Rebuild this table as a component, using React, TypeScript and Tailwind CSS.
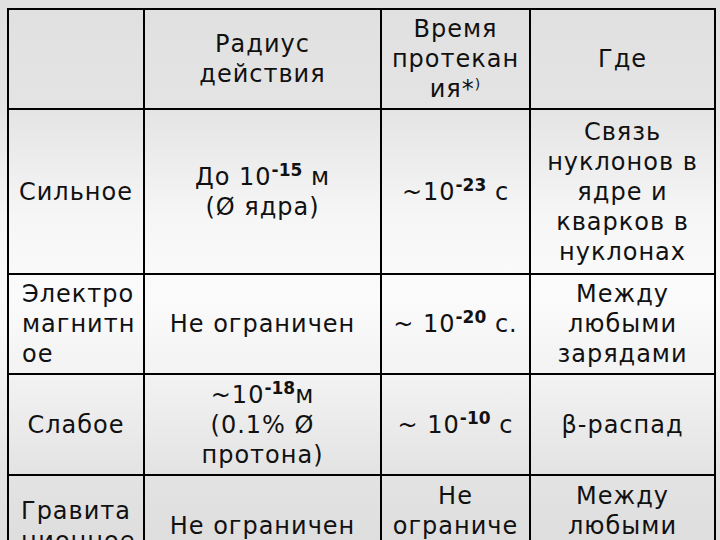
import React from "react";

const Sup = ({ children }: { children: React.ReactNode }) => (
  <span className="relative -top-[9px] text-[17px] font-bold leading-none tracking-normal">{children}</span>
);

export default function App() {
  const td = "border-2 border-black align-middle px-[4px] text-center";
  return (
    <div
      className="w-[720px] h-[540px] overflow-hidden bg-[linear-gradient(to_bottom,#e0e0e0_0%,#e4e4e4_20%,#f6f6f6_40%,#fbfbfb_55%,#f2f2f2_70%,#e3e3e3_88%,#dedede_100%)] text-[#111] text-[24px] leading-[30px] tracking-[1px]"
      style={{ fontFamily: '"DejaVu Sans", Verdana, sans-serif' }}
    >
      <div className="pt-[8px] pl-[7px]">
        <table className="border-collapse table-fixed w-[707px]">
          <colgroup>
            <col className="w-[136px]" />
            <col className="w-[237px]" />
            <col className="w-[149px]" />
            <col className="w-[185px]" />
          </colgroup>
          <tbody>
            <tr className="h-[100px]">
              <td className={td}></td>
              <td className={td}>
                Радиус
                <br />
                действия
              </td>
              <td className={td}>
                Время
                <br />
                протекан
                <br />
                ия*<span className="relative -top-[8px] text-[14px] leading-none">)</span>
              </td>
              <td className={td}>Где</td>
            </tr>
            <tr className="h-[165px]">
              <td className={td}>Сильное</td>
              <td className={td}>
                До 10<Sup>-15</Sup> м
                <br />
                (Ø ядра)
              </td>
              <td className={td}>
                ~10<Sup>-23</Sup> с
              </td>
              <td className={td}>
                Связь
                <br />
                нуклонов в
                <br />
                ядре и
                <br />
                кварков в
                <br />
                нуклонах
              </td>
            </tr>
            <tr className="h-[100px]">
              <td className={`${td} !text-left !pl-[13px]`}>
                Электро
                <br />
                магнитн
                <br />
                ое
              </td>
              <td className={td}>Не ограничен</td>
              <td className={td}>
                ~ 10<Sup>-20</Sup> с.
              </td>
              <td className={td}>
                Между
                <br />
                любыми
                <br />
                зарядами
              </td>
            </tr>
            <tr className="h-[101px]">
              <td className={td}>Слабое</td>
              <td className={td}>
                ~10<Sup>-18</Sup>м
                <br />
                (0.1% Ø
                <br />
                протона)
              </td>
              <td className={td}>
                ~ 10<Sup>-10</Sup> с
              </td>
              <td className={td}>β-распад</td>
            </tr>
            <tr className="h-[101px]">
              <td className={`${td} !text-left !pl-[12px]`}>
                Гравита
                <br />
                ционное
              </td>
              <td className={td}>Не ограничен</td>
              <td className={td}>
                Не
                <br />
                ограниче
                <br />н
              </td>
              <td className={td}>
                Между
                <br />
                любыми
                <br />
                массами
              </td>
            </tr>
          </tbody>
        </table>
      </div>
    </div>
  );
}
